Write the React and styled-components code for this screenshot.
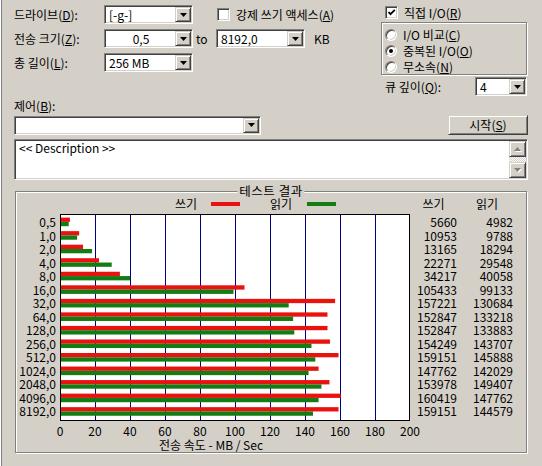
import React from 'react';
import styled, { createGlobalStyle } from 'styled-components';

const RED = '#e8120f';
const GREEN = '#137d14';
const ROW_H = 13.54;
const SCALE = 1.75; // px per MB/s

const rows = [
  ['0,5', 5660, 4982],
  ['1,0', 10953, 9788],
  ['2,0', 13165, 18294],
  ['4,0', 22271, 29548],
  ['8,0', 34217, 40058],
  ['16,0', 105433, 99133],
  ['32,0', 157221, 130684],
  ['64,0', 152847, 133218],
  ['128,0', 152847, 133883],
  ['256,0', 154249, 143707],
  ['512,0', 159151, 145888],
  ['1024,0', 147762, 142029],
  ['2048,0', 153978, 149407],
  ['4096,0', 160419, 147762],
  ['8192,0', 159151, 144579],
];

const ticks = [0, 20, 40, 60, 80, 100, 120, 140, 160, 180, 200];

const GlobalStyle = createGlobalStyle`
  html, body {
    margin: 0;
    padding: 0;
    background: #d4d0c8;
  }
  body {
    font-family: 'Noto Sans CJK KR', 'Liberation Sans', sans-serif;
    font-size: 12px;
    color: #000;
    text-autospace: no-autospace;
  }
  u { text-decoration-thickness: 1px; text-underline-offset: 1px; }
`;

const Window = styled.div`
  width: 542px;
  height: 466px;
  box-sizing: border-box;
  background: #d4d0c8;
  box-shadow: inset 1px 0 #ffffff, inset 2px 0 #808080;
  padding: 5px 14px 0 14px;
  display: flex;
  flex-direction: column;
  overflow: hidden;
`;

const Top = styled.div`
  display: flex;
  height: 91px;
`;

const LeftForm = styled.div`
  width: 367px;
  display: flex;
  flex-direction: column;
  gap: 5px;
`;

const FormRow = styled.div`
  display: flex;
  align-items: center;
  height: 19px;
`;

const Label = styled.span`
  width: ${p => p.$w || 90}px;
  flex: none;
  line-height: 14px;
  white-space: nowrap;
`;

const Combo = styled.div`
  width: ${p => p.$w}px;
  height: 19px;
  flex: none;
  box-sizing: border-box;
  background: #fff;
  border: 1px solid;
  border-color: #808080 #ffffff #ffffff #808080;
  box-shadow: inset 1px 1px #404040, inset -1px -1px #d4d0c8;
  padding: 1px;
  display: flex;
  align-items: center;
`;

const ComboText = styled.span`
  flex: 1;
  padding: 0 2px 0 3px;
  text-align: ${p => p.$align || 'left'};
  line-height: 14px;
  white-space: nowrap;
`;

const RaisedBox = styled.span`
  box-sizing: border-box;
  background: #d4d0c8;
  border: 1px solid;
  border-color: #d4d0c8 #404040 #404040 #d4d0c8;
  box-shadow: inset 1px 1px #ffffff, inset -1px -1px #808080;
  display: flex;
  align-items: center;
  justify-content: center;
`;

const DropButton = styled(RaisedBox)`
  width: 16px;
  height: 15px;
  flex: none;
`;

const Arrow = ({ color = '#000', up = false }) => (
  <svg width="7" height="4" viewBox="0 0 7 4">
    <polygon points={up ? '3.5,0 7,4 0,4' : '0,0 7,0 3.5,4'} fill={color} />
  </svg>
);

const ComboBox = ({ w, value, align }) => (
  <Combo $w={w}>
    <ComboText $align={align}>{value}</ComboText>
    <DropButton>
      <Arrow />
    </DropButton>
  </Combo>
);

const ToText = styled.span`
  width: 20px;
  padding-left: 3px;
  line-height: 14px;
`;

const Unit = styled.span`
  margin-left: 9px;
  line-height: 14px;
`;

const CheckLabel = styled.label`
  display: flex;
  align-items: center;
  gap: 6px;
  margin-left: ${p => p.$ml || 0}px;
  line-height: 14px;
  white-space: nowrap;
`;

const Box = styled.span`
  width: 13px;
  height: 13px;
  flex: none;
  box-sizing: border-box;
  background: #fff;
  border: 1px solid;
  border-color: #808080 #ffffff #ffffff #808080;
  box-shadow: inset 1px 1px #404040, inset -1px -1px #d4d0c8;
  display: flex;
  align-items: center;
  justify-content: center;
`;

const CheckBox = ({ checked }) => (
  <Box>
    {checked && (
      <svg width="9" height="9" viewBox="0 0 9 9">
        <path d="M1.5 4 L3.5 6.2 L7.8 1.8" stroke="#000" strokeWidth="1.8" fill="none" />
      </svg>
    )}
  </Box>
);

const Circle = styled.span`
  width: 12px;
  height: 12px;
  flex: none;
  box-sizing: border-box;
  border-radius: 50%;
  background: #fff;
  border: 1px solid;
  border-color: #808080 #ffffff #ffffff #808080;
  box-shadow: inset 1px 1px #404040, inset -1px -1px #d4d0c8;
  display: flex;
  align-items: center;
  justify-content: center;

  &::after {
    content: '';
    display: ${p => (p.$on ? 'block' : 'none')};
    width: 4px;
    height: 4px;
    border-radius: 50%;
    background: #000;
  }
`;

const RightForm = styled.div`
  width: 147px;
  display: flex;
  flex-direction: column;
`;

const TopCheck = styled(CheckLabel)`
  height: 13px;
  margin: 1px 0 0 4px;
`;

const Etched = styled.div`
  box-sizing: border-box;
  border: 1px solid #808080;
  box-shadow: inset 1px 1px #ffffff, 1px 1px #ffffff;
`;

const RadioGroup = styled(Etched)`
  margin-top: 3px;
  height: 53px;
  width: 146px;
  padding: 4px 0 0 3px;
  display: flex;
  flex-direction: column;
  gap: 1px;
`;

const RadioItem = styled.label`
  display: flex;
  align-items: center;
  gap: 6px;
  height: 15px;
  line-height: 14px;
  white-space: nowrap;
`;

const QueueRow = styled(FormRow)`
  margin-top: 2px;
  padding-left: 4px;
`;

const ControlLabel = styled.div`
  margin-top: 3px;
  line-height: 14px;
`;

const ControlRow = styled.div`
  margin-top: 2px;
  height: 20px;
  display: flex;
  align-items: center;
  justify-content: space-between;
`;

const StartButton = styled(RaisedBox)`
  width: 80px;
  height: 20px;
  line-height: 14px;
`;

const Description = styled.div`
  margin-top: 4px;
  height: 41px;
  box-sizing: border-box;
  background: #fff;
  border: 1px solid;
  border-color: #808080 #ffffff #ffffff #808080;
  box-shadow: inset 1px 1px #404040, inset -1px -1px #d4d0c8;
  padding: 1px;
  display: flex;
`;

const DescText = styled.div`
  flex: 1;
  padding: 0 3px;
  line-height: 14px;
`;

const ScrollBar = styled.div`
  width: 17px;
  display: flex;
  flex-direction: column;
`;

const ScrollButton = styled(RaisedBox)`
  width: 17px;
  height: 16px;
  flex: none;
`;

const Track = styled.div`
  flex: 1;
  background: repeating-conic-gradient(#ffffff 0 25%, #d4d0c8 0 50%) 0 0 / 2px 2px;
`;

const DisabledArrow = ({ up }) => (
  <svg width="8" height="5" viewBox="0 0 8 5">
    <polygon points={up ? '4.5,1 8,5 1,5' : '1,1 8,1 4.5,5'} fill="#ffffff" />
    <polygon points={up ? '3.5,0 7,4 0,4' : '0,0 7,0 3.5,4'} fill="#808080" />
  </svg>
);

const Group = styled(Etched)`
  position: relative;
  margin: 11px 1px 0 1px;
  height: 262px;
  display: grid;
  grid-template-columns: 40px 350px 51px 56px;
  grid-template-rows: 22px 207px 17px 13px;
`;

const GroupTitle = styled.span`
  position: absolute;
  top: -8px;
  left: 50%;
  transform: translateX(-50%);
  padding: 0 2px;
  background: #d4d0c8;
  line-height: 14px;
  font-size: 12.5px;
  letter-spacing: 0.5px;
  white-space: nowrap;
`;

const Legend = styled.div`
  grid-column: 2;
  grid-row: 1;
  margin-left: 4px;
  padding: 2px 0 0 115px;
  display: flex;
  align-items: center;
`;

const LegendText = styled.span`
  width: ${p => p.$w}px;
  line-height: 14px;
`;

const Swatch = styled.span`
  width: 29px;
  height: 4px;
  margin-right: ${p => p.$mr || 0}px;
  background: ${p => p.$color};
`;

const ColHead = styled.div`
  grid-row: 1;
  grid-column: ${p => p.$col};
  margin-left: 4px;
  padding-top: 5px;
  text-align: center;
  line-height: 14px;
`;

const Column = styled.div`
  grid-row: 2;
  grid-column: ${p => p.$col};
  padding-top: 1px;
  display: flex;
  flex-direction: column;
`;

const Cell = styled.span`
  height: ${ROW_H}px;
  line-height: ${ROW_H}px;
  text-align: right;
  white-space: nowrap;
`;

const PlotSvg = styled.svg`
  grid-row: 2;
  grid-column: 2;
  margin-left: 4px;
  display: block;
`;

const Ticks = styled.div`
  grid-row: 3;
  grid-column: 2;
  margin-left: -13.5px;
  width: 385px;
  padding-top: 4px;
  display: flex;
`;

const Tick = styled.span`
  flex: 0 0 35px;
  text-align: center;
  line-height: 12px;
`;

const AxisTitle = styled.div`
  grid-row: 4;
  grid-column: 2 / 5;
  margin-left: 103px;
  line-height: 13px;
  white-space: nowrap;
`;

const Plot = () => (
  <PlotSvg width="350" height="207" viewBox="0 0 350 207">
    <rect x="0.5" y="0.5" width="349" height="206" fill="#fff" stroke="#000" />
    {[1, 2, 3, 4, 5, 6, 7, 8, 9].map(k => (
      <line key={k} x1={35 * k + 0.5} x2={35 * k + 0.5} y1="1" y2="206" stroke="#000080" />
    ))}
    {rows.map(([name, w, r], i) => {
      const y = 3.6 + i * ROW_H;
      return (
        <g key={name}>
          <rect x="1" y={y} width={(w / 1000) * SCALE - 1} height="4.3" fill={RED} />
          <rect x="1" y={y + 4.3} width={(r / 1000) * SCALE - 1} height="4.3" fill={GREEN} />
        </g>
      );
    })}
  </PlotSvg>
);

export default function App() {
  return (
    <>
      <GlobalStyle />
      <Window>
        <Top>
          <LeftForm>
            <FormRow>
              <Label>드라이브(<u>D</u>):</Label>
              <ComboBox w={89} value="[-g-]" />
              <CheckLabel $ml={24}>
                <CheckBox />
                <span>강제 쓰기 액세스(<u>A</u>)</span>
              </CheckLabel>
            </FormRow>
            <FormRow>
              <Label>전송 크기(<u>Z</u>):</Label>
              <ComboBox w={89} value="0,5" align="center" />
              <ToText>to</ToText>
              <ComboBox w={89} value="8192,0" />
              <Unit>KB</Unit>
            </FormRow>
            <FormRow>
              <Label>총 길이(<u>L</u>):</Label>
              <ComboBox w={89} value="256 MB" />
            </FormRow>
          </LeftForm>
          <RightForm>
            <TopCheck>
              <CheckBox checked />
              <span>직접 I/O(<u>R</u>)</span>
            </TopCheck>
            <RadioGroup>
              <RadioItem>
                <Circle />
                <span>I/O 비교(<u>C</u>)</span>
              </RadioItem>
              <RadioItem>
                <Circle $on />
                <span>중복된 I/O(<u>O</u>)</span>
              </RadioItem>
              <RadioItem>
                <Circle />
                <span>무소속(<u>N</u>)</span>
              </RadioItem>
            </RadioGroup>
            <QueueRow>
              <Label $w={90}>큐 깊이(<u>Q</u>):</Label>
              <ComboBox w={52} value="4" />
            </QueueRow>
          </RightForm>
        </Top>

        <ControlLabel>제어(<u>B</u>):</ControlLabel>
        <ControlRow>
          <ComboBox w={247} value="" />
          <StartButton>
            <span>시작(<u>S</u>)</span>
          </StartButton>
        </ControlRow>

        <Description>
          <DescText>&lt;&lt; Description &gt;&gt;</DescText>
          <ScrollBar>
            <ScrollButton>
              <DisabledArrow up />
            </ScrollButton>
            <Track />
            <ScrollButton>
              <DisabledArrow />
            </ScrollButton>
          </ScrollBar>
        </Description>

        <Group>
          <GroupTitle>테스트 결과</GroupTitle>
          <Legend>
            <LegendText $w={36}>쓰기</LegendText>
            <Swatch $color={RED} $mr={30} />
            <LegendText $w={37}>읽기</LegendText>
            <Swatch $color={GREEN} />
          </Legend>
          <ColHead $col={3}>쓰기</ColHead>
          <ColHead $col={4}>읽기</ColHead>

          <Column $col={1}>
            {rows.map(([name]) => (
              <Cell key={name}>{name}</Cell>
            ))}
          </Column>
          <Plot />
          <Column $col={3}>
            {rows.map(([name, w]) => (
              <Cell key={name}>{w}</Cell>
            ))}
          </Column>
          <Column $col={4}>
            {rows.map(([name, , r]) => (
              <Cell key={name}>{r}</Cell>
            ))}
          </Column>

          <Ticks>
            {ticks.map(t => (
              <Tick key={t}>{t}</Tick>
            ))}
          </Ticks>
          <AxisTitle>전송 속도 - MB / Sec</AxisTitle>
        </Group>
      </Window>
    </>
  );
}
